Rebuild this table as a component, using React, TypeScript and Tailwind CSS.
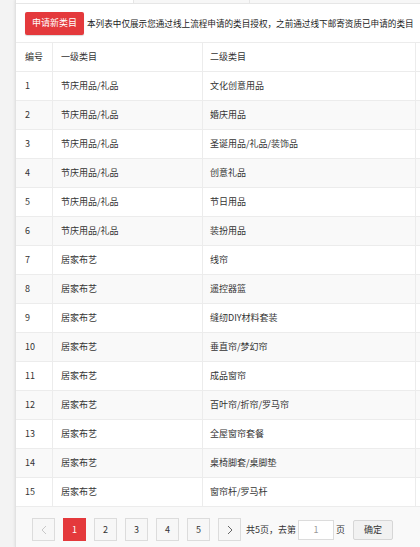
import React from 'react'

const rows: [number, string, string][] = [
  [1, '节庆用品/礼品', '文化创意用品'],
  [2, '节庆用品/礼品', '婚庆用品'],
  [3, '节庆用品/礼品', '圣诞用品/礼品/装饰品'],
  [4, '节庆用品/礼品', '创意礼品'],
  [5, '节庆用品/礼品', '节日用品'],
  [6, '节庆用品/礼品', '装扮用品'],
  [7, '居家布艺', '线帘'],
  [8, '居家布艺', '遥控器篮'],
  [9, '居家布艺', '缝纫DIY材料套装'],
  [10, '居家布艺', '垂直帘/梦幻帘'],
  [11, '居家布艺', '成品窗帘'],
  [12, '居家布艺', '百叶帘/折帘/罗马帘'],
  [13, '居家布艺', '全屋窗帘套餐'],
  [14, '居家布艺', '桌椅脚套/桌脚垫'],
  [15, '居家布艺', '窗帘杆/罗马杆'],
]

const font = { fontFamily: '"Microsoft YaHei", "Noto Sans CJK SC", sans-serif' }

export default function App() {
  return (
    <div className="flex h-[547px] w-[420px] overflow-hidden bg-[#f3f3f3] text-[9px] text-[#333]" style={font}>
      <div className="w-[15px] shrink-0 bg-[#f3f3f3]" />
      <div className="flex min-w-0 flex-1 flex-col border-l border-[#e2e2e2] bg-white shadow-[-1px_0_2px_rgba(0,0,0,0.06)]">
        {/* tabs strip */}
        <div className="flex h-[4px] shrink-0 border-b border-[#e6e6e6]">
          <div className="w-[117px] bg-white" />
          <div className="w-[117px] border-x border-[#e6e6e6] bg-[#f7f7f7]" />
          <div className="flex-1 bg-[#f7f7f7]" />
        </div>

        {/* toolbar */}
        <div className="flex h-[38px] shrink-0 items-center whitespace-nowrap pl-[9px]">
          <button className="h-[23px] w-[59px] shrink-0 rounded-[2px] bg-[#e4393c] text-[9px] text-white shadow-[0_1px_1px_rgba(0,0,0,0.15)]">
            申请新类目
          </button>
          <span className="ml-[3px] text-[8.6px] text-[#222]">
            本列表中仅展示您通过线上流程申请的类目授权，之前通过线下邮寄资质已申请的类目
          </span>
        </div>

        {/* table */}
        <div className="w-[520px] shrink-0 border-t border-[#ececec]">
          <div className="flex h-[29px] items-center border-b border-[#ececec] bg-white">
            <div className="flex h-full w-[37px] items-center border-r border-[#ececec] pl-[9px]">编号</div>
            <div className="flex h-full w-[150px] items-center border-r border-[#ececec] pl-[8px]">一级类目</div>
            <div className="flex h-full w-[213px] items-center border-r border-[#ececec] pl-[7px]">二级类目</div>
            <div className="h-full flex-1" />
          </div>
          {rows.map(([n, a, b]) => (
            <div
              key={n}
              className={`flex h-[29px] items-center border-b border-[#ececec] ${n % 2 === 0 ? 'bg-[#f9f9f9]' : 'bg-white'}`}
            >
              <div className="flex h-full w-[37px] items-center border-r border-[#ececec] pl-[9px]">{n}</div>
              <div className="flex h-full w-[150px] items-center border-r border-[#ececec] pl-[8px]">{a}</div>
              <div className="flex h-full w-[213px] items-center border-r border-[#ececec] pl-[7px]">{b}</div>
              <div className="h-full flex-1" />
            </div>
          ))}
        </div>

        {/* pagination */}
        <div className="flex flex-1 items-start bg-[#f9f9f9] pl-[16px] pt-[11px] whitespace-nowrap">
          <div className="flex items-center gap-[8px]">
            <button className="flex h-[23px] w-[23px] items-center justify-center border border-[#dcdcdc] bg-[#f7f7f7]">
              <svg width="6" height="10" viewBox="0 0 6 10" fill="none" stroke="#c8c8c8" strokeWidth="1">
                <path d="M5 1 1 5l4 4" />
              </svg>
            </button>
            <button className="h-[23px] w-[23px] border border-[#e4393c] bg-[#e4393c] text-[9px] text-white">1</button>
            {[2, 3, 4, 5].map((p) => (
              <button key={p} className="h-[23px] w-[23px] border border-[#dcdcdc] bg-[#f7f7f7] text-[9px] text-[#333]">
                {p}
              </button>
            ))}
            <button className="flex h-[23px] w-[23px] items-center justify-center border border-[#dcdcdc] bg-[#f7f7f7]">
              <svg width="6" height="10" viewBox="0 0 6 10" fill="none" stroke="#666" strokeWidth="1">
                <path d="M1 1l4 4-4 4" />
              </svg>
            </button>
          </div>
          <div className="ml-[5px] flex h-[23px] items-center">
            <span>共5页，去第</span>
            <input
              readOnly
              value="1"
              className="ml-[2px] h-[20px] w-[36px] border border-[#dcdcdc] bg-white text-center text-[9px] text-[#999] outline-none"
              style={font}
            />
            <span className="ml-[2px]">页</span>
            <button className="ml-[8px] h-[20px] w-[40px] rounded-[2px] border border-[#d6d6d6] bg-[#f1f1f1] text-[9px] text-[#333]">
              确定
            </button>
          </div>
        </div>
      </div>
    </div>
  )
}
